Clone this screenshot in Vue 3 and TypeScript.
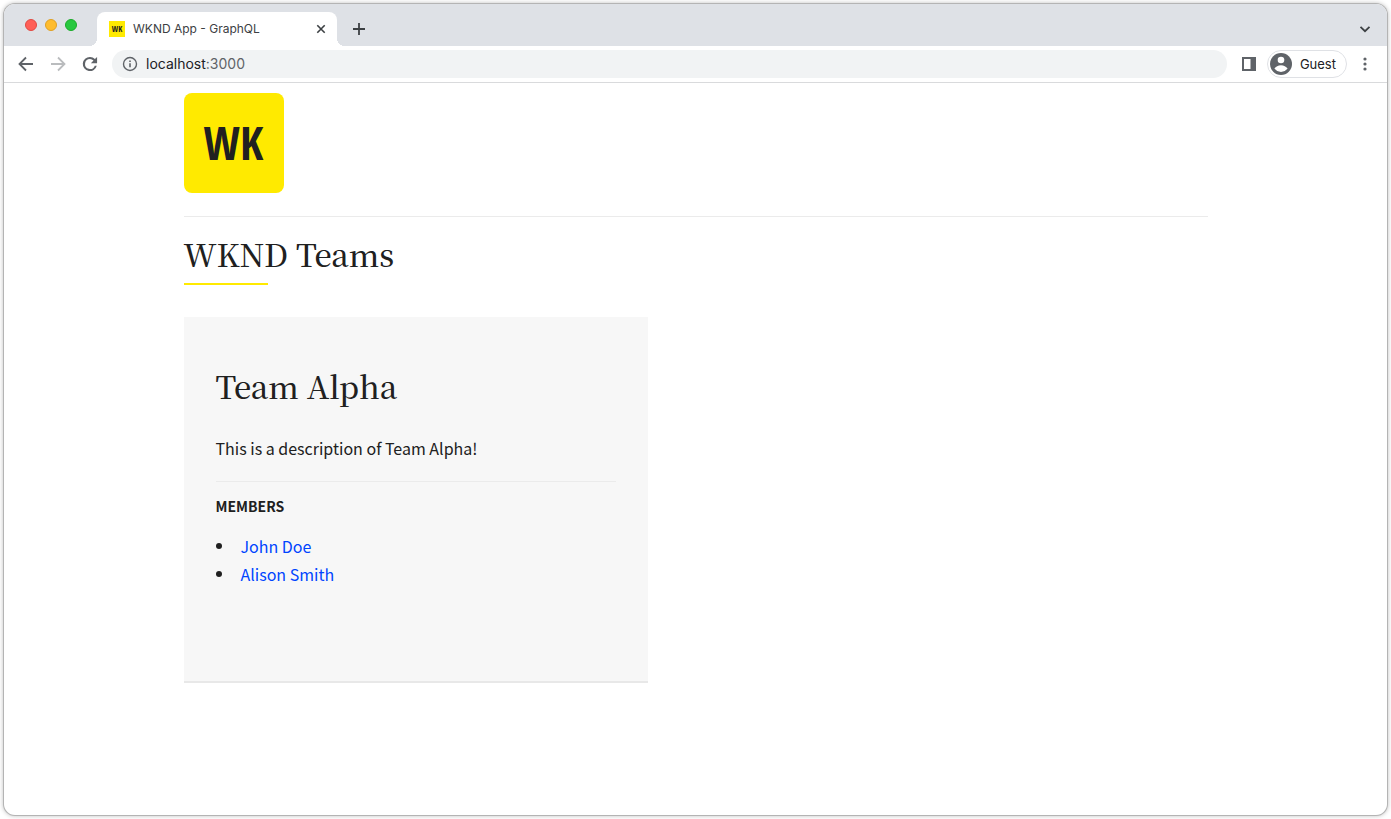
<script setup lang="ts">
interface Member {
  name: string
  href: string
}

const team = {
  title: 'Team Alpha',
  description: 'This is a description of Team Alpha!',
  members: [
    { name: 'John Doe', href: '#john-doe' },
    { name: 'Alison Smith', href: '#alison-smith' },
  ] as Member[],
}
</script>

<template>
  <div class="window">
    <header class="tab-strip">
      <div class="lights">
        <button class="light close" aria-label="Close window"></button>
        <button class="light minimize" aria-label="Minimize window"></button>
        <button class="light expand" aria-label="Expand window"></button>
      </div>
      <div class="tab">
        <span class="favicon">WK</span>
        <span class="tab-title">WKND App - GraphQL</span>
        <button class="icon-button" aria-label="Close tab">
          <svg width="16" height="16" viewBox="0 0 16 16"><path d="M4.3 4.3l7.4 7.4M11.7 4.3l-7.4 7.4" stroke="#3c4043" stroke-width="1.6" /></svg>
        </button>
      </div>
      <button class="icon-button new-tab" aria-label="New tab">
        <svg width="16" height="16" viewBox="0 0 16 16"><path d="M8 2v12M2 8h12" stroke="#3c4043" stroke-width="1.8" /></svg>
      </button>
      <button class="icon-button tab-search" aria-label="Search tabs">
        <svg width="16" height="16" viewBox="0 0 16 16"><path d="M3.5 5.8L8 10.2l4.500-4.400" fill="none" stroke="#3c4043" stroke-width="1.8" /></svg>
      </button>
    </header>

    <nav class="toolbar">
      <button class="icon-button" aria-label="Back">
        <svg width="20" height="20" viewBox="0 0 20 20"><path d="M17 10H4M10 3.500L3.500 10l6.500 6.500" fill="none" stroke="#5f6368" stroke-width="1.8" /></svg>
      </button>
      <button class="icon-button" aria-label="Forward">
        <svg width="20" height="20" viewBox="0 0 20 20"><path d="M3 10h13M10 3.500l6.500 6.500-6.500 6.500" fill="none" stroke="#babcbe" stroke-width="1.8" /></svg>
      </button>
      <button class="icon-button" aria-label="Reload">
        <svg width="20" height="20" viewBox="0 0 24 24"><path d="M20.500 3.500v7.500H13l3.200-3.200A6.100 6.100 0 0 0 12 6a6 6 0 1 0 5.700 8h2.400A8.500 8.500 0 1 1 12 3.500c2.300 0 4.400.9 5.900 2.500z" fill="#5f6368" /></svg>
      </button>
      <div class="address">
        <svg width="16" height="16" viewBox="0 0 16 16"><circle cx="8" cy="8" r="6.500" fill="none" stroke="#5f6368" stroke-width="1.400" /><path d="M8 7.200v4M8 4.500V6" stroke="#5f6368" stroke-width="1.600" /></svg>
        <a class="url" href="#">localhost<span class="port">:3000</span></a>
      </div>
      <button class="icon-button panel" aria-label="Side panel">
        <svg width="16" height="16" viewBox="0 0 16 16"><path d="M1 1h14v14H1zM3 3v10h6.500V3z" fill="#5f6368" fill-rule="evenodd" /></svg>
      </button>
      <button class="profile">
        <svg width="22" height="22" viewBox="0 0 22 22"><circle cx="11" cy="11" r="11" fill="#5f6368" /><circle cx="11" cy="7" r="3.300" fill="#fff" /><path d="M4.400 15.600c1.400-2 3.800-3.400 6.600-3.400s5.200 1.400 6.600 3.400c-1.500 2-3.900 3.300-6.600 3.300s-5.100-1.300-6.600-3.300z" fill="#fff" /></svg>
        <span>Guest</span>
      </button>
      <button class="icon-button menu" aria-label="Menu">
        <svg width="16" height="16" viewBox="0 0 16 16" fill="#5f6368"><circle cx="8" cy="3" r="1.600" /><circle cx="8" cy="8" r="1.600" /><circle cx="8" cy="13" r="1.600" /></svg>
      </button>
    </nav>

    <main class="page">
      <a class="logo" href="#" aria-label="WKND home">WK</a>
      <hr class="rule" />
      <h1 class="heading page-title">WKND Teams</h1>
      <article class="card">
        <h2 class="heading card-title">{{ team.title }}</h2>
        <p class="description">{{ team.description }}</p>
        <hr class="rule" />
        <h3 class="members-label">MEMBERS</h3>
        <ul class="members">
          <li v-for="member in team.members" :key="member.name">
            <a :href="member.href">{{ member.name }}</a>
          </li>
        </ul>
      </article>
    </main>
  </div>
</template>

<style>
body {
  margin: 0;
  background: #fff;
}
</style>

<style scoped>
* {
  box-sizing: border-box;
}

button {
  margin: 0;
  padding: 0;
  border: 0;
  background: none;
  font: inherit;
  color: inherit;
}

a {
  text-decoration: none;
}

svg {
  display: block;
}

.window {
  display: flow-root;
  min-height: calc(100vh - 8px);
  margin: 4px;
  overflow: hidden;
  border-radius: 11px;
  background: #fff;
  box-shadow: 0 0 0 1px #b4b4b4, 0 0 4px 1px rgba(0, 0, 0, 0.25);
  font-family: Inter, "Liberation Sans", sans-serif;
}

.tab-strip {
  display: flex;
  align-items: flex-end;
  height: 42px;
  padding-right: 14px;
  background: #dee1e6;
}

.lights {
  display: flex;
  align-self: flex-start;
  gap: 8px;
  padding: 15px 20px 0 21px;
}

.light {
  width: 12px;
  height: 12px;
  border-radius: 50%;
}

.close {
  border: 1px solid #e14942;
  background: #ff5f57;
}

.minimize {
  border: 1px solid #dfa023;
  background: #febc2e;
}

.expand {
  border: 1px solid #1aab29;
  background: #28c840;
}

.tab {
  position: relative;
  display: flex;
  align-items: center;
  width: 240px;
  height: 34px;
  padding: 0 8px 0 12px;
  border-radius: 8px 8px 0 0;
  background: #fff;
}

.tab::before,
.tab::after {
  position: absolute;
  bottom: 0;
  width: 8px;
  height: 8px;
  content: "";
}

.tab::before {
  right: 100%;
  background: radial-gradient(circle at 0 0, transparent 8px, #fff 8px);
}

.tab::after {
  left: 100%;
  background: radial-gradient(circle at 100% 0, transparent 8px, #fff 8px);
}

.favicon {
  width: 16px;
  background: #ffea00;
  color: #202020;
  font: bold 8px/16px "Liberation Sans Narrow", "Open Sans Condensed", "Liberation Sans", sans-serif;
  text-align: center;
}

.tab-title {
  flex: 1;
  margin-left: 8px;
  padding-bottom: 2px;
  color: #3c4043;
  font-size: 12px;
}

.new-tab {
  margin: 0 auto 9px 14px;
}

.tab-search {
  margin-bottom: 9px;
}

.toolbar {
  display: flex;
  align-items: center;
  gap: 12px;
  height: 37px;
  padding: 0 14px 0 12px;
  border-bottom: 1px solid #d9dadc;
}

.address {
  display: flex;
  flex: 1;
  align-items: center;
  gap: 8px;
  height: 28px;
  padding: 0 10px;
  border-radius: 14px;
  background: #f1f3f4;
}

.url {
  padding-bottom: 2px;
  color: #202124;
  font-size: 14px;
}

.port {
  color: #5f6368;
}

.panel {
  margin-left: 2px;
}

.profile {
  display: flex;
  align-items: center;
  gap: 8px;
  height: 28px;
  padding: 0 10px 0 2px;
  margin: 0 -2px;
  border: 1px solid #dfe1e5;
  border-radius: 14px;
  color: #202124;
  font-size: 13px;
}

.page {
  width: 100%;
  max-width: 1024px;
  margin: 0 auto;
  padding: 10px 0 32px;
  color: #202020;
  font-family: "Noto Sans CJK JP", "Noto Sans", sans-serif;
}

.logo {
  display: block;
  width: 100px;
  height: 100px;
  border-radius: 8px;
  background: #ffea00;
  color: #202020;
  font: bold 46px/98px "Liberation Sans Narrow", "Open Sans Condensed", "Liberation Sans", sans-serif;
  text-align: center;
}

.rule {
  height: 1px;
  margin: 0;
  border: 0;
  background: #ebebeb;
}

.logo + .rule {
  margin-top: 23px;
}

.heading {
  margin: 0;
  font-family: "Noto Serif CJK JP", "Liberation Serif", serif;
  font-size: 31px;
  font-weight: 500;
  line-height: 46px;
}

.page-title {
  padding-top: 14px;
}

.page-title::after {
  display: block;
  width: 84px;
  height: 2px;
  margin-top: 6px;
  background: #ffea00;
  content: "";
}

.card {
  width: 100%;
  max-width: 464px;
  min-height: 366px;
  margin-top: 32px;
  padding: 46px 32px 80px;
  border-bottom: 2px solid #e8e8e8;
  background: #f7f7f7;
}

.description {
  margin: 25px 0 19px;
  font-size: 16px;
  line-height: 28px;
}

.members-label {
  margin: 10px 0 12px;
  font-size: 14px;
  font-weight: 700;
  line-height: 28px;
}

.members {
  margin: 0;
  padding: 0;
  list-style: none;
  font-size: 16px;
  line-height: 28px;
}

.members li {
  display: flex;
  align-items: center;
  gap: 19px;
}

.members li::before {
  width: 6px;
  height: 6px;
  border-radius: 50%;
  background: #202020;
  content: "";
}

.members a {
  color: #0045ff;
}
</style>
